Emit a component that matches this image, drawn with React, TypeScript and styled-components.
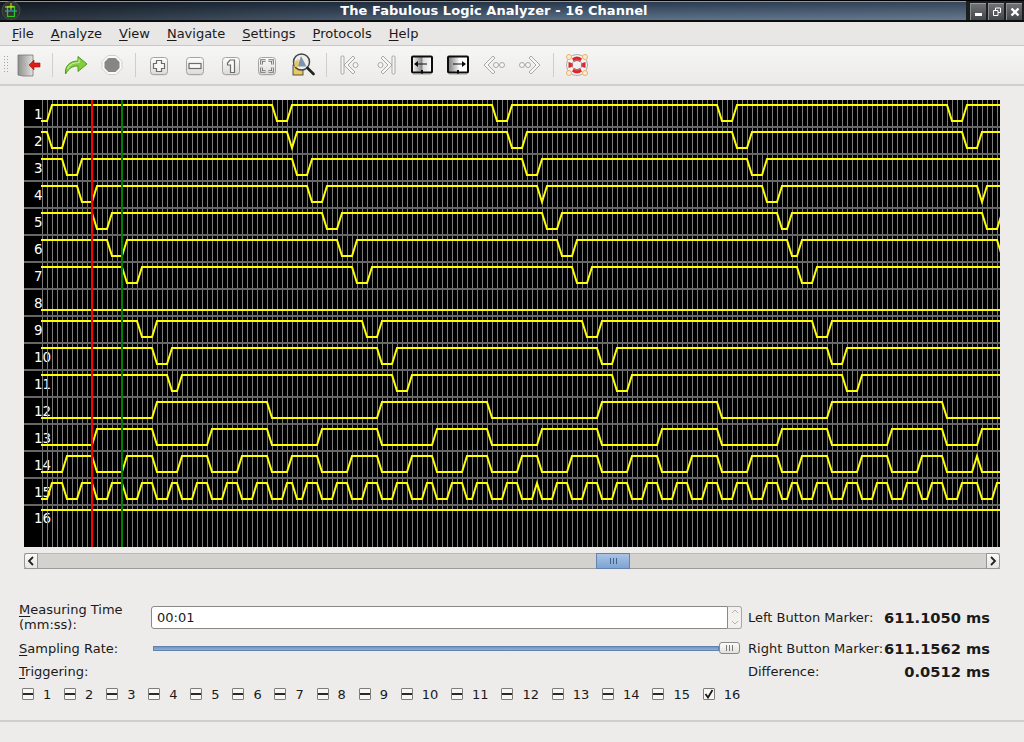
import React from 'react';
import styled, { createGlobalStyle } from 'styled-components';

const GlobalStyle = createGlobalStyle`
    html, body {
        margin: 0;
        height: 100%;
        overflow: hidden;
    }
    body {
        font-family: "DejaVu Sans", sans-serif;
        font-size: 13px;
        color: #1a1a1a;
        background: #edecea;
    }
`;

const Window = styled.div`
    display: flex;
    flex-direction: column;
    width: 1024px;
    height: 742px;
    background: #edecea;
`;

const TitleBar = styled.div`
    display: flex;
    align-items: center;
    height: 22px;
    box-sizing: border-box;
    border-top: 1px solid #000;
    border-bottom: 2px solid #0a0c0e;
    background: linear-gradient(to right, rgba(0, 0, 0, 0.55), rgba(0, 0, 0, 0) 55%, rgba(255, 255, 255, 0.08)),
        linear-gradient(to bottom, #24354a 0%, #5a6f86 100%);
    box-shadow: inset 0 1px 0 #8d97a2;
`;

const TitleText = styled.div`
    flex: 1;
    text-align: center;
    color: #fff;
    font-weight: bold;
    font-size: 13px;
    letter-spacing: 0.05px;
    line-height: 19px;
`;

const WinButtons = styled.div`
    display: flex;
    gap: 2px;
    height: 19px;
    padding: 0 2px 0 4px;
    background: #1c1f22;
`;

const WinButton = styled.div`
    display: flex;
    align-items: center;
    justify-content: center;
    width: 16px;
    height: 17px;
    margin-top: 2px;
    background: linear-gradient(to bottom, #6f7275, #44474a);
    border-top: 1px solid #9a9c9e;
    border-left: 1px solid #8a8c8e;
    box-sizing: border-box;
`;

const MenuBar = styled.div`
    display: flex;
    gap: 17px;
    height: 24px;
    box-sizing: border-box;
    padding: 0 0 0 12px;
    align-items: center;
    background: #e8e7e5;
    border-bottom: 1px solid #c9c8c5;
    line-height: 23px;
`;

const Mnemonic = styled.span`
    text-decoration: underline;
    text-underline-offset: 2px;
`;

const ToolBar = styled.div`
    display: flex;
    align-items: center;
    height: 40px;
    box-sizing: border-box;
    padding-left: 4px;
    background: linear-gradient(to bottom, #f6f6f4, #ebeae8);
    border-bottom: 2px solid #d0cfcc;
`;

const Grip = styled.div`
    width: 5px;
    height: 18px;
    margin-right: 2px;
    background-image: radial-gradient(circle at 0.5px 0.5px, #a8a7a4 0.7px, transparent 0.8px);
    background-size: 3px 3px;
`;

const ToolButton = styled.div`
    display: flex;
    align-items: center;
    justify-content: center;
    width: 36px;
    height: 38px;
`;

const ToolSep = styled.div`
    width: 1px;
    height: 24px;
    margin: 0 5px;
    background: #cfcecb;
`;

const Content = styled.div`
    display: flex;
    flex-direction: column;
    padding: 14px 24px 0;
`;

const Plot = styled.svg`
    display: block;
    width: 976px;
    height: 447px;
    background: #000;
`;

const ScrollBar = styled.div`
    display: flex;
    height: 16px;
    margin-top: 6px;
    box-sizing: border-box;
    background: #d3d2ce;
    border-top: 1px solid #bcbbb7;
    border-bottom: 1px solid #9c9b97;
`;

const ScrollArrow = styled.div`
    display: flex;
    align-items: center;
    justify-content: center;
    width: 14px;
    margin: -1px 0;
    box-sizing: border-box;
    background: linear-gradient(to bottom, #fbfbfa, #e6e5e3);
    border: 1px solid #96958f;
    border-radius: ${(props: { $right?: boolean }) => (props.$right ? '0 3px 3px 0' : '3px 0 0 3px')};
`;

const ScrollTrack = styled.div`
    flex: 1;
    display: flex;
    padding-left: 558px;
`;

const ScrollThumb = styled.div`
    display: flex;
    align-items: center;
    justify-content: center;
    gap: 2px;
    width: 34px;
    margin: -1px 0;
    box-sizing: border-box;
    background: linear-gradient(to bottom, #a9c4e4, #7fa3d2);
    border: 1px solid #6383ad;
`;

const Tick = styled.span`
    width: 1px;
    height: 6px;
    background: ${(props: { $color?: string }) => props.$color || '#3f5f8a'};
`;

const Panel = styled.div`
    display: grid;
    grid-template-columns: 132px 591px 142px 106px;
    grid-template-rows: 34px 28px 18px 28px;
    padding: 31px 0 0 19px;
    align-items: center;
`;

const Label = styled.div`
    line-height: 15px;
`;

const RightLabel = styled.div`
    padding-left: 6px;
    white-space: nowrap;
`;

const Value = styled.div`
    font-size: 14.67px;
    font-weight: bold;
    text-align: right;
    white-space: nowrap;
`;

const SpinRow = styled.div`
    display: flex;
    height: 23px;
`;

const TimeInput = styled.input`
    flex: 1;
    min-width: 0;
    box-sizing: border-box;
    height: 23px;
    padding: 0 5px;
    border: 1px solid #8a8985;
    border-radius: 3px 0 0 3px;
    background: #fff;
    font-family: "DejaVu Sans", sans-serif;
    font-size: 13px;
    color: #1a1a1a;
    outline: none;
`;

const Spin = styled.div`
    display: flex;
    flex-direction: column;
    width: 14px;
    box-sizing: border-box;
    border: 1px solid #a9a8a4;
    border-left: none;
    border-radius: 0 3px 3px 0;
    background: #f2f1ef;
`;

const SpinPart = styled.div`
    flex: 1;
    display: flex;
    align-items: center;
    justify-content: center;
`;

const Slider = styled.div`
    display: flex;
    align-items: center;
    height: 14px;
    padding: 0 2px;
`;

const SliderGroove = styled.div`
    flex: 1;
    height: 5px;
    box-sizing: border-box;
    background: linear-gradient(to bottom, #6f94c6, #8fb0d8);
    border: 1px solid #6383ad;
`;

const SliderHandle = styled.div`
    display: flex;
    align-items: center;
    justify-content: center;
    gap: 2px;
    width: 21px;
    height: 12px;
    box-sizing: border-box;
    background: linear-gradient(to bottom, #fbfbfa, #e2e1de);
    border: 1px solid #8a8985;
    border-radius: 3px;
`;

const Triggers = styled.div`
    grid-column: 1 / -1;
    display: flex;
    gap: 12.8px;
    padding-left: 3px;
`;

const Trigger = styled.div`
    display: flex;
    align-items: center;
    gap: 9px;
`;

const Box = styled.div`
    display: flex;
    align-items: center;
    justify-content: center;
    width: 12px;
    height: 12px;
    box-sizing: border-box;
    background: #f7f7f6;
    border: 1px solid #7e7d79;
    border-radius: 1px;
`;

const Dash = styled.span`
    width: 10px;
    height: 2px;
    background: #2a2a2a;
`;

const StatusBar = styled.div`
    flex: 1;
    margin-top: 12px;
    border-top: 2px solid #d0cfcc;
`;

const X_START = 42;
const STEP = 5;
const ROW_H = 27;

const GRID_XS = Array.from({ length: 192 }, (_, k) => X_START + STEP * k + 0.5);
const ROWS = Array.from({ length: 16 }, (_, i) => i);

// ranges of grid samples where the channel is low (0-10) or high (11-14)
const channels: { lows?: number[][]; highs?: number[][] }[] = [
    { lows: [[0, 1], [47, 49], [91, 93], [136, 138], [182, 184]] },
    { lows: [[2, 4], [50, 50], [94, 96], [139, 141], [185, 187]] },
    { lows: [[5, 7], [51, 53], [97, 99], [142, 144]] },
    { lows: [[8, 10], [54, 56], [100, 100], [145, 147], [188, 188]] },
    { lows: [[11, 13], [57, 59], [101, 103], [148, 149], [189, 191]] },
    { lows: [[14, 16], [60, 62], [104, 106], [150, 151], [192, 196]] },
    { lows: [[17, 19], [63, 65], [107, 109], [152, 154]] },
    { highs: [] },
    { lows: [[20, 22], [65, 67], [109, 111], [155, 157]] },
    { lows: [[23, 25], [68, 70], [112, 114], [158, 160]] },
    { lows: [[26, 27], [71, 73], [115, 117], [161, 163]] },
    { highs: [[23, 45], [68, 89], [112, 135], [158, 180]] },
    { highs: [[11, 22], [34, 45], [56, 67], [79, 89], [100, 111], [124, 135], [148, 157], [170, 180], [188, 196]] },
    {
        highs: [[5, 10], [17, 22], [28, 33], [40, 45], [50, 55], [62, 67], [74, 78], [85, 89], [96, 99], [106, 111],
            [118, 123], [130, 135], [142, 147], [152, 157], [164, 169], [176, 180], [187, 187]],
    },
    {
        highs: [[2, 4], [8, 10], [14, 16], [20, 22], [26, 27], [31, 33], [37, 39], [43, 45], [49, 50], [53, 55],
            [59, 61], [65, 67], [71, 73], [77, 78], [82, 84], [87, 89], [93, 95], [99, 99], [103, 105], [109, 111],
            [115, 117], [121, 123], [127, 129], [133, 135], [139, 141], [145, 147], [150, 151], [155, 157], [161, 163],
            [167, 169], [173, 175], [178, 180], [184, 187], [191, 196]],
    },
    { lows: [] },
];

const wavePath = (row: number) => {
    const { lows, highs } = channels[row];
    const inRange = (list: number[][], k: number) => list.some(([a, b]) => k >= a && k <= b);
    const top = 105 + ROW_H * row;
    const bottom = top + 16;
    let d = '';
    for (let k = 0; k < 193; k++) {
        const high = highs ? inRange(highs, k) : !inRange(lows || [], k);
        const y = high ? top : bottom;
        d += k === 0 ? `M41 ${y} L${X_START} ${y}` : ` L${X_START + STEP * k} ${y}`;
    }
    return d;
};

const Waves = () => (
    <Plot viewBox="24 100 976 447">
        {ROWS.map((i) => (
            <text key={i} x={34} y={i === 15 ? 523 : 119 + ROW_H * i} fill="#fff" fontSize="13.5" fontFamily="DejaVu Sans">
                {i + 1}
            </text>
        ))}
        {GRID_XS.map((x) => (
            <line key={x} x1={x} x2={x} y1={100} y2={547} stroke="#7c7c7c" strokeWidth="1" />
        ))}
        {ROWS.slice(0, 15).map((i) => (
            <rect key={i} x={24} y={126 + ROW_H * i} width={976} height={2} fill="#666" />
        ))}
        {ROWS.map((i) => (
            <path key={i} d={wavePath(i)} fill="none" stroke="#ffff00" strokeWidth="2" />
        ))}
        <rect x={91} y={100} width={2} height={447} fill="#ff0000" />
        <rect x={121} y={100} width={2} height={447} fill="#008000" />
    </Plot>
);

const AppIcon = () => (
    <svg width="22" height="19" viewBox="0 0 22 19" style={{ flexShrink: 0 }}>
        <circle cx="11" cy="9.500" r="9" fill="#2f322e" stroke="#4a4d48" strokeWidth="1" />
        <rect x="7.500" y="5.500" width="7" height="10" fill="none" stroke="#35c02a" strokeWidth="1.300" />
        <path d="M11 2v7M5 6h9" fill="none" stroke="#e8e020" strokeWidth="1" />
        <path d="M5 10h12" stroke="#28b8c8" strokeWidth="1" />
    </svg>
);

const ExitIcon = () => (
    <svg width="24" height="24" viewBox="0 0 24 24">
        <defs>
            <linearGradient id="door" x1="0" x2="1" y1="0" y2="0">
                <stop offset="0" stopColor="#8e8e8c" />
                <stop offset="1" stopColor="#e2e2e0" />
            </linearGradient>
        </defs>
        <path d="M1 2h15v21H6l-5-1z" fill="url(#door)" stroke="#777" strokeWidth="0.8" />
        <path d="M6 10l3 3M9 10l-3 3" stroke="#aaa" strokeWidth="1" />
        <path d="M12 12l5-5v3h6v4h-6v3z" fill="#e01b14" stroke="#a01010" strokeWidth="0.6" />
    </svg>
);

const RunIcon = () => (
    <svg width="24" height="24" viewBox="0 0 24 24">
        <path
            d="M1.500 21C0.500 13 6 8 14 8V3.500l9 7.500-9 7.500V13c-5-.2-9 2-12.500 8z"
            fill="#84cc40"
            stroke="#4f9a1e"
            strokeWidth="1"
            strokeLinejoin="round"
        />
        <path d="M3.500 16C5 12 9 9.500 15 9.500V6.500" fill="none" stroke="#c8f09c" strokeWidth="1.200" />
    </svg>
);

const StopIcon = () => (
    <svg width="24" height="24" viewBox="0 0 24 24">
        <path d="M8 2.500h8l6 6v7l-6 6H8l-6-6v-7z" fill="#fafafa" stroke="#cfcfcd" strokeWidth="1" />
        <path d="M8.500 5h7l4 4v6l-4 4h-7l-4-4V9z" fill="#868686" />
    </svg>
);

const KeyIcon = ({ children }: { children: React.ReactNode }) => (
    <svg width="24" height="24" viewBox="0 0 24 24">
        <defs>
            <linearGradient id="key" x1="0" x2="0" y1="0" y2="1">
                <stop offset="0" stopColor="#fdfdfc" />
                <stop offset="1" stopColor="#dcdbd8" />
            </linearGradient>
        </defs>
        <rect x="3.500" y="5.500" width="17" height="17" rx="3" fill="#bdbcb8" opacity="0.5" />
        <rect x="3.500" y="4.500" width="17" height="17" rx="3" fill="url(#key)" stroke="#a5a4a0" />
        <g transform="translate(0 1)">{children}</g>
    </svg>
);

const KEY_STROKE = { fill: '#f8f8f7', stroke: '#6c6c6a', strokeWidth: 1.2 };

const PlusIcon = () => (
    <KeyIcon>
        <path d="M9.500 6.500h5v3h3v5h-3v3h-5v-3h-3v-5h3z" {...KEY_STROKE} />
    </KeyIcon>
);

const MinusIcon = () => (
    <KeyIcon>
        <rect x="6" y="9.500" width="12" height="5" {...KEY_STROKE} />
    </KeyIcon>
);

const OneIcon = () => (
    <KeyIcon>
        <path d="M11 6h4.500v12.500h-4V11H8.500V9z" {...KEY_STROKE} />
    </KeyIcon>
);

const FitIcon = () => (
    <KeyIcon>
        <path d="M6.500 10.500v-4h4M13.500 6.500h4v4M17.500 13.500v4h-4M10.500 17.500h-4v-4" fill="none" stroke="#6c6c6a" strokeWidth="2.600" />
        <path d="M6.500 10.500v-4h4M13.500 6.500h4v4M17.500 13.500v4h-4M10.500 17.500h-4v-4" fill="none" stroke="#f8f8f7" strokeWidth="0.800" />
    </KeyIcon>
);

const ZoomSelectIcon = () => (
    <svg width="24" height="24" viewBox="0 0 24 24">
        <rect x="2" y="12" width="10" height="10" fill="#e8c860" stroke="#333" strokeWidth="0.8" />
        <circle cx="10.500" cy="9" r="8" fill="#eeeeee" stroke="#444" strokeWidth="1.500" />
        <path d="M10 3l5.500 10.500H6.500z" fill="#7f93ad" />
        <path d="M3.500 9l4-3v8h-4z" fill="#e4c860" />
        <path d="M16.500 15l6 6" stroke="#222" strokeWidth="2.600" strokeLinecap="round" />
    </svg>
);

const NAV_STROKE = { fill: '#f6f6f5', stroke: '#a8a8a6', strokeWidth: 1 };

const FirstIcon = () => (
    <svg width="24" height="24" viewBox="0 0 24 24">
        <rect x="3" y="3" width="3" height="18" rx="1" {...NAV_STROKE} />
        <path d="M15 3l2 2-7 7 7 7-2 2-9-9z" {...NAV_STROKE} />
        <circle cx="17.500" cy="12" r="2.500" {...NAV_STROKE} />
    </svg>
);

const LastIcon = () => (
    <svg width="24" height="24" viewBox="0 0 24 24">
        <rect x="18" y="3" width="3" height="18" rx="1" {...NAV_STROKE} />
        <path d="M9 3L7 5l7 7-7 7 2 2 9-9z" {...NAV_STROKE} />
        <circle cx="6.500" cy="12" r="2.500" {...NAV_STROKE} />
    </svg>
);

const BookIcon = ({ flip }: { flip?: boolean }) => {
    const id = flip ? 'pageR' : 'pageL';
    return (
        <svg width="24" height="24" viewBox="0 0 24 24">
            <defs>
                <linearGradient id={id} x1="0" x2="1" y1="0" y2="0">
                    <stop offset="0" stopColor={flip ? '#777' : '#fff'} />
                    <stop offset="0.5" stopColor={flip ? '#e8e8e8' : '#888'} />
                    <stop offset="0.55" stopColor={flip ? '#fff' : '#ddd'} />
                    <stop offset="1" stopColor="#fff" />
                </linearGradient>
            </defs>
            <rect x="2" y="3.500" width="20" height="16" rx="1" fill={`url(#${id})`} stroke="#0c0c0c" strokeWidth="2" />
            <path d="M12 17v4" stroke="#0c0c0c" strokeWidth="2" />
            <rect x="3" y="20.500" width="18" height="1.500" fill="#aaa" opacity="0.6" />
            {flip ? (
                <path d="M7 10.500h9V8l4 3-4 3v-2.500H7z" fill="#0c0c0c" />
            ) : (
                <path d="M17 10.500H8V8l-4 3 4 3v-2.500h9z" fill="#0c0c0c" />
            )}
        </svg>
    );
};

const BackIcon = () => (
    <svg width="24" height="24" viewBox="0 0 24 24">
        <path d="M11 3l2 2-7 7 7 7-2 2-9-9z" {...NAV_STROKE} />
        <circle cx="14" cy="12" r="2.500" {...NAV_STROKE} />
        <circle cx="20" cy="12" r="2.500" {...NAV_STROKE} />
    </svg>
);

const ForwardIcon = () => (
    <svg width="24" height="24" viewBox="0 0 24 24">
        <path d="M13 3l-2 2 7 7-7 7 2 2 9-9z" {...NAV_STROKE} />
        <circle cx="10" cy="12" r="2.500" {...NAV_STROKE} />
        <circle cx="4" cy="12" r="2.500" {...NAV_STROKE} />
    </svg>
);

const HelpIcon = () => (
    <svg width="24" height="24" viewBox="0 0 24 24">
        <circle cx="12" cy="12" r="8" fill="none" stroke="#f4f4f4" strokeWidth="5.500" />
        <path d="M7 5.500A8 8 0 0 1 17 5.500L15 9a5 5 0 0 0-6 0z" fill="#e0252a" />
        <path d="M7 18.500A8 8 0 0 0 17 18.500L15 15a5 5 0 0 1-6 0z" fill="#e0252a" />
        <path d="M3.500 9L8 10.500v3L3.500 15zM20.500 9L16 10.500v3l4.500 1.500z" fill="#e0252a" />
        <circle cx="12" cy="12" r="5" fill="none" stroke="#999" strokeWidth="0.8" />
        <circle cx="12" cy="12" r="10.500" fill="none" stroke="#999" strokeWidth="0.8" />
        <circle cx="4" cy="4" r="2.500" fill="#f8ecd8" stroke="#eeb060" strokeWidth="1" />
        <circle cx="20" cy="4" r="2.500" fill="#f8ecd8" stroke="#eeb060" strokeWidth="1" />
        <circle cx="4" cy="20" r="2.500" fill="#f8ecd8" stroke="#eeb060" strokeWidth="1" />
        <circle cx="20" cy="20" r="2.500" fill="#f8ecd8" stroke="#eeb060" strokeWidth="1" />
    </svg>
);

const TRIGGERS = Array.from({ length: 16 }, (_, i) => i + 1);

const App: React.FC = () => (
    <Window>
        <GlobalStyle />
        <TitleBar>
            <AppIcon />
            <TitleText>The Fabulous Logic Analyzer - 16 Channel</TitleText>
            <WinButtons>
                <WinButton>
                    <svg width="10" height="10" viewBox="0 0 10 10">
                        <rect x="1" y="6" width="7" height="3" fill="#fff" />
                    </svg>
                </WinButton>
                <WinButton>
                    <svg width="10" height="10" viewBox="0 0 10 10">
                        <path d="M3.500 3.500V1h5v4.500H6M1.500 3.500h4.500v5h-4.500z" fill="none" stroke="#fff" strokeWidth="1" />
                    </svg>
                </WinButton>
                <WinButton>
                    <svg width="10" height="10" viewBox="0 0 10 10">
                        <path d="M1.500 1.500l7 7M8.500 1.500l-7 7" stroke="#fff" strokeWidth="2.400" />
                    </svg>
                </WinButton>
            </WinButtons>
        </TitleBar>
        <MenuBar>
            <span><Mnemonic>F</Mnemonic>ile</span>
            <span><Mnemonic>A</Mnemonic>nalyze</span>
            <span><Mnemonic>V</Mnemonic>iew</span>
            <span><Mnemonic>N</Mnemonic>avigate</span>
            <span><Mnemonic>S</Mnemonic>ettings</span>
            <span><Mnemonic>P</Mnemonic>rotocols</span>
            <span><Mnemonic>H</Mnemonic>elp</span>
        </MenuBar>
        <ToolBar>
            <Grip />
            <ToolButton><ExitIcon /></ToolButton>
            <ToolSep />
            <ToolButton><RunIcon /></ToolButton>
            <ToolButton><StopIcon /></ToolButton>
            <ToolSep />
            <ToolButton><PlusIcon /></ToolButton>
            <ToolButton><MinusIcon /></ToolButton>
            <ToolButton><OneIcon /></ToolButton>
            <ToolButton><FitIcon /></ToolButton>
            <ToolButton><ZoomSelectIcon /></ToolButton>
            <ToolSep />
            <ToolButton><FirstIcon /></ToolButton>
            <ToolButton><LastIcon /></ToolButton>
            <ToolButton><BookIcon /></ToolButton>
            <ToolButton><BookIcon flip /></ToolButton>
            <ToolButton><BackIcon /></ToolButton>
            <ToolButton><ForwardIcon /></ToolButton>
            <ToolSep />
            <ToolButton><HelpIcon /></ToolButton>
        </ToolBar>
        <Content>
            <Waves />
            <ScrollBar>
                <ScrollArrow>
                    <svg width="8" height="10" viewBox="0 0 8 10">
                        <path d="M6 1L2 5l4 4" fill="none" stroke="#222" strokeWidth="1.800" />
                    </svg>
                </ScrollArrow>
                <ScrollTrack>
                    <ScrollThumb>
                        <Tick />
                        <Tick />
                        <Tick />
                    </ScrollThumb>
                </ScrollTrack>
                <ScrollArrow $right>
                    <svg width="8" height="10" viewBox="0 0 8 10">
                        <path d="M2 1l4 4-4 4" fill="none" stroke="#222" strokeWidth="1.800" />
                    </svg>
                </ScrollArrow>
            </ScrollBar>
        </Content>
        <Panel>
            <Label><Mnemonic>M</Mnemonic>easuring Time<br />(mm:ss):</Label>
            <SpinRow>
                <TimeInput readOnly value="00:01" />
                <Spin>
                    <SpinPart>
                        <svg width="8" height="5" viewBox="0 0 8 5">
                            <path d="M1 4l3-3 3 3" fill="none" stroke="#b5b4b0" />
                        </svg>
                    </SpinPart>
                    <SpinPart>
                        <svg width="8" height="5" viewBox="0 0 8 5">
                            <path d="M1 1l3 3 3-3" fill="none" stroke="#b5b4b0" />
                        </svg>
                    </SpinPart>
                </Spin>
            </SpinRow>
            <RightLabel>Left Button Marker:</RightLabel>
            <Value>611.1050 ms</Value>
            <Label><Mnemonic>S</Mnemonic>ampling Rate:</Label>
            <Slider>
                <SliderGroove />
                <SliderHandle>
                    <Tick $color="#777" />
                    <Tick $color="#777" />
                    <Tick $color="#777" />
                </SliderHandle>
            </Slider>
            <RightLabel>Right Button Marker:</RightLabel>
            <Value>611.1562 ms</Value>
            <Label><Mnemonic>T</Mnemonic>riggering:</Label>
            <div />
            <RightLabel>Difference:</RightLabel>
            <Value>0.0512 ms</Value>
            <Triggers>
                {TRIGGERS.map((n) => (
                    <Trigger key={n}>
                        <Box>
                            {n === 16 ? (
                                <svg width="10" height="10" viewBox="0 0 10 10">
                                    <path d="M1.500 5l2.500 3.500L8.500 1" fill="none" stroke="#1a1a1a" strokeWidth="1.800" />
                                </svg>
                            ) : (
                                <Dash />
                            )}
                        </Box>
                        <span>{n}</span>
                    </Trigger>
                ))}
            </Triggers>
        </Panel>
        <StatusBar />
    </Window>
);

export default App;
